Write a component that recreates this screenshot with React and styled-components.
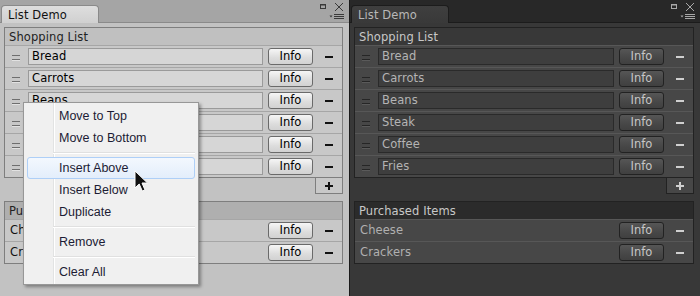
import React from "react";
import styled, { createGlobalStyle, ThemeProvider, css } from "styled-components";

const light = {
  strip: "#a5a5a5",
  tabBg: "linear-gradient(#dedede, #d0d0d0)",
  tabBorder: "#8a8a8a",
  tabText: "#111",
  body: "#c2c2c2",
  bodyLine: "#8a8a8a",
  boxBorder: "#7e7e7e",
  header: "#c0c0c0",
  headerInactive: "#afafaf",
  headerText: "#222",
  row: "#c8c8c8",
  rowLine: "#a6a6a6",
  fieldBg: "#d6d6d6",
  fieldBorder: "#9a9a9a",
  fieldText: "#000",
  handle: "#6e6e6e",
  handleHi: "#e2e2e2",
  btnBg: "linear-gradient(#f6f6f6, #dcdcdc 60%, #d2d2d2)",
  btnBorder: "#6a6a6a",
  btnText: "#000",
  minus: "#111",
  icon: "#3a3a3a",
  labelText: "#111",
};

const dark = {
  strip: "#282828",
  tabBg: "linear-gradient(#3f3f3f, #393939)",
  tabBorder: "#1c1c1c",
  tabText: "#b8b8b8",
  body: "#383838",
  bodyLine: "#1c1c1c",
  boxBorder: "#222222",
  header: "#383838",
  headerInactive: "#2b2b2b",
  headerText: "#c8c8c8",
  row: "#474747",
  rowLine: "#575757",
  fieldBg: "#3e3e3e",
  fieldBorder: "#2a2a2a",
  fieldText: "#b4b4b4",
  handle: "#262626",
  handleHi: "#5a5a5a",
  btnBg: "linear-gradient(#565656, #474747 60%, #404040)",
  btnBorder: "#222222",
  btnText: "#c6c6c6",
  minus: "#cfcfcf",
  icon: "#a8a8a8",
  labelText: "#b0b0b0",
};

const GlobalStyle = createGlobalStyle`
  html, body { margin: 0; padding: 0; background: #191919; overflow: hidden; }
  * { box-sizing: border-box; }
`;

const Screen = styled.div`
  display: flex;
  width: 700px;
  height: 296px;
  font-family: "DejaVu Sans", Verdana, sans-serif;
  font-size: 11px;
`;

const Pane = styled.div`
  position: relative;
  width: 350px;
  height: 296px;
  display: flex;
  flex-direction: column;
  background: ${(p) => p.theme.body};
  ${(p) => p.$divider && css`border-right: 1px solid #1a1a1a;`}
`;

const TabStrip = styled.div`
  height: 23px;
  flex: none;
  display: flex;
  align-items: flex-end;
  padding-left: 1px;
  padding-right: 3px;
  background: ${(p) => p.theme.strip};
  border-bottom: 1px solid ${(p) => p.theme.bodyLine};
`;

const Tab = styled.div`
  width: 98px;
  height: 18px;
  margin-bottom: -1px;
  padding: 2px 0 0 6px;
  background: ${(p) => p.theme.tabBg};
  border: 1px solid ${(p) => p.theme.tabBorder};
  border-bottom: none;
  border-radius: 4px 4px 0 0;
  color: ${(p) => p.theme.tabText};
  font-size: 11.5px;
  line-height: 14px;
  letter-spacing: 0.1px;
`;

const Controls = styled.svg`
  margin-left: auto;
  align-self: stretch;
  width: 28px;
  height: 22px;
`;

const Body = styled.div`
  flex: 1;
  display: flex;
  flex-direction: column;
  padding: 4px 6px 0 4px;
`;

const Box = styled.div`
  border: 1px solid ${(p) => p.theme.boxBorder};
  background: ${(p) => p.theme.row};
`;

const Header = styled.div`
  height: 17px;
  padding-left: 4px;
  display: flex;
  align-items: center;
  background: ${(p) => (p.$inactive ? p.theme.headerInactive : p.theme.header)};
  color: ${(p) => p.theme.headerText};
  font-size: 11.5px;
  letter-spacing: 0.1px;
`;

const Row = styled.div`
  height: 22px;
  border-top: 1px solid ${(p) => p.theme.rowLine};
  display: flex;
  align-items: center;
  padding: 0 9px 0 ${(p) => (p.$plain ? 5 : 7)}px;
  gap: 5px;
`;

const Handle = styled.div`
  width: 8px;
  height: 5px;
  margin-right: 3px;
  margin-top: 1px;
  border-top: 1px solid ${(p) => p.theme.handle};
  border-bottom: 1px solid ${(p) => p.theme.handle};
  box-shadow: 0 1px 0 ${(p) => p.theme.handleHi};
`;

const Field = styled.div`
  flex: 1;
  height: 17px;
  padding: 0 3px 2px;
  display: flex;
  align-items: center;
  background: ${(p) => p.theme.fieldBg};
  border: 1px solid ${(p) => p.theme.fieldBorder};
  color: ${(p) => p.theme.fieldText};
  font-size: 11.5px;
  letter-spacing: 0.1px;
`;

const Label = styled.div`
  flex: 1;
  color: ${(p) => p.theme.labelText};
  font-size: 11.5px;
  letter-spacing: 0.1px;
  padding-bottom: 2px;
`;

const InfoButton = styled.div`
  width: 45px;
  height: 17px;
  display: flex;
  align-items: center;
  justify-content: center;
  border: 1px solid ${(p) => p.theme.btnBorder};
  border-radius: 3px;
  background: ${(p) => p.theme.btnBg};
  color: ${(p) => p.theme.btnText};
  font-size: 11.5px;
  padding-bottom: 1px;
`;

const Minus = styled.div`
  width: 8px;
  height: 2px;
  margin-left: 7px;
  background: ${(p) => p.theme.minus};
`;

const Footer = styled.div`
  display: flex;
  justify-content: flex-end;
  margin-bottom: 7px;
`;

const AddButton = styled.div`
  width: 28px;
  height: 16px;
  border: 1px solid ${(p) => p.theme.boxBorder};
  border-top: none;
  background: ${(p) => p.theme.row};
  display: flex;
  align-items: center;
  justify-content: center;
  position: relative;
  &::before, &::after {
    content: "";
    position: absolute;
    background: ${(p) => p.theme.minus};
  }
  &::before { width: 8px; height: 2px; }
  &::after { width: 2px; height: 8px; }
`;

const Menu = styled.div`
  position: absolute;
  left: 23px;
  top: 102px;
  width: 176px;
  padding: 2px 3px 1px 3px;
  background-color: #f0f0f0;
  background-image: linear-gradient(
    to right,
    transparent 29px,
    #e2e3e3 29px,
    #e2e3e3 30px,
    #ffffff 30px,
    #ffffff 31px,
    transparent 31px
  );
  border: 1px solid #979797;
  box-shadow: 2px 2px 3px rgba(0, 0, 0, 0.35);
  font-family: "Liberation Sans", Arial, sans-serif;
  font-size: 12.5px;
  color: #1c1c34;
  z-index: 5;
`;

const MenuItem = styled.div`
  height: 22px;
  display: flex;
  align-items: center;
  padding-left: 31px;
  border: 1px solid transparent;
  border-radius: 3px;
  ${(p) =>
    p.$active &&
    css`
      border-color: #aecff7;
      background: linear-gradient(#f3f8fe, #e3eefb);
    `}
`;

const MenuSeparator = styled.div`
  height: 8px;
  margin-left: 26px;
  display: flex;
  flex-direction: column;
  justify-content: center;
  &::before { content: ""; height: 1px; background: #e0e0e0; }
  &::after { content: ""; height: 1px; background: #ffffff; }
`;

const Cursor = styled.svg`
  position: absolute;
  left: 134px;
  top: 170px;
  width: 15px;
  height: 23px;
  z-index: 6;
`;

const IconG = styled.g`
  stroke: ${(p) => p.theme.icon};
  fill: none;
`;
const IconFill = styled.path`
  fill: ${(p) => p.theme.icon};
`;

const shopping = ["Bread", "Carrots", "Beans", "Steak", "Coffee", "Fries"];
const purchased = ["Cheese", "Crackers"];

function WindowControls() {
  return (
    <Controls viewBox="0 0 28 22">
      <IconG strokeWidth="1">
        <rect x="2.5" y="4.5" width="5" height="4" />
        <line x1="2" y1="5" x2="8" y2="5" />
        <line x1="17" y1="3" x2="25" y2="11" />
        <line x1="25" y1="3" x2="17" y2="11" />
        <line x1="16" y1="14.5" x2="26" y2="14.5" />
        <line x1="16" y1="16.5" x2="26" y2="16.5" />
        <line x1="16" y1="18.5" x2="26" y2="18.5" />
      </IconG>
      <IconFill d="M11.5 15.5 L14.5 15.5 L13 17.5 Z" />
    </Controls>
  );
}

function Panel({ withMenu }) {
  return (
    <>
      <TabStrip>
        <Tab>List Demo</Tab>
        <WindowControls />
      </TabStrip>
      <Body>
        <Box>
          <Header>Shopping List</Header>
          {shopping.map((item) => (
            <Row key={item}>
              <Handle />
              <Field>{item}</Field>
              <InfoButton>Info</InfoButton>
              <Minus />
            </Row>
          ))}
        </Box>
        <Footer>
          <AddButton />
        </Footer>
        <Box>
          <Header $inactive>Purchased Items</Header>
          {purchased.map((item) => (
            <Row key={item} $plain>
              <Label>{item}</Label>
              <InfoButton>Info</InfoButton>
              <Minus />
            </Row>
          ))}
        </Box>
      </Body>
      {withMenu && (
        <>
          <Menu>
            <MenuItem>Move to Top</MenuItem>
            <MenuItem>Move to Bottom</MenuItem>
            <MenuSeparator />
            <MenuItem $active>Insert Above</MenuItem>
            <MenuItem>Insert Below</MenuItem>
            <MenuItem>Duplicate</MenuItem>
            <MenuSeparator />
            <MenuItem>Remove</MenuItem>
            <MenuSeparator />
            <MenuItem>Clear All</MenuItem>
          </Menu>
          <Cursor viewBox="0 0 15 23">
            <path
              d="M1 1 L1 18 L5.2 14 L8.3 21 L11 20 L8 13 L13.5 13 Z"
              fill="#111"
              stroke="#fff"
              strokeWidth="1"
              strokeLinejoin="round"
            />
          </Cursor>
        </>
      )}
    </>
  );
}

export default function App() {
  return (
    <>
      <GlobalStyle />
      <Screen>
        <ThemeProvider theme={light}>
          <Pane $divider>
            <Panel withMenu />
          </Pane>
        </ThemeProvider>
        <ThemeProvider theme={dark}>
          <Pane>
            <Panel />
          </Pane>
        </ThemeProvider>
      </Screen>
    </>
  );
}
